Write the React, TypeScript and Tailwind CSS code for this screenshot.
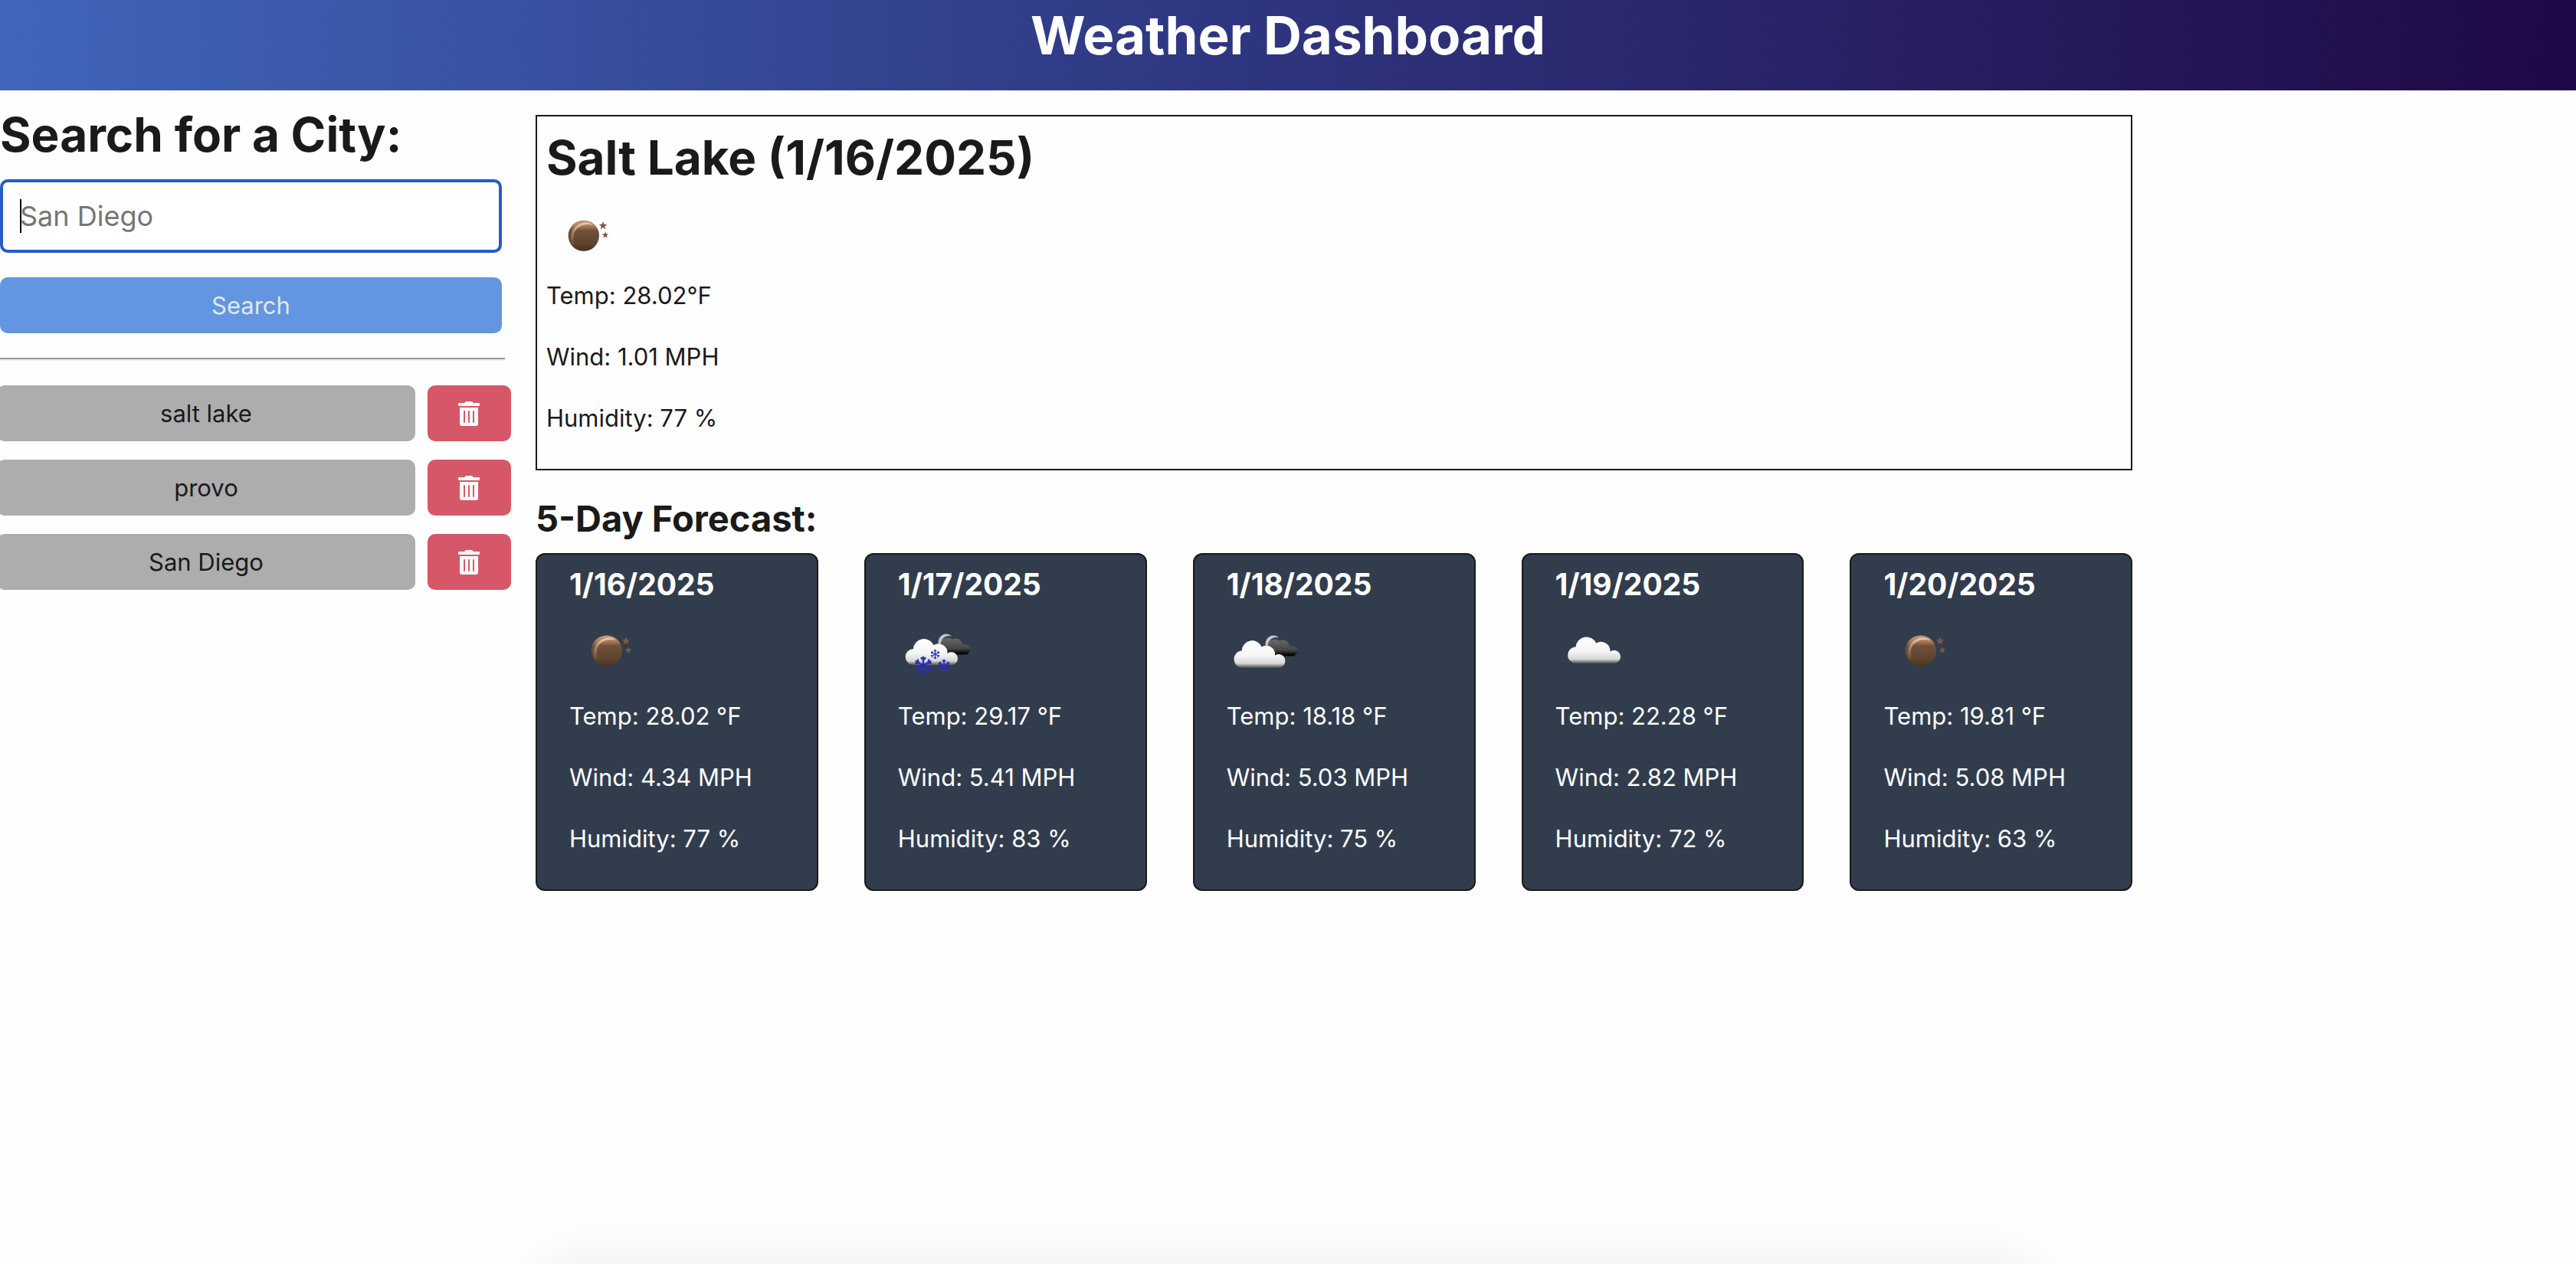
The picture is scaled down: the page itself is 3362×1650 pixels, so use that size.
import { FaTrashAlt } from "react-icons/fa";

type Sky = "clearNight" | "snow" | "brokenClouds" | "clouds";

const history = ["salt lake", "provo", "San Diego"];

const forecast: { date: string; sky: Sky; temp: string; wind: string; humidity: string }[] = [
  { date: "1/16/2025", sky: "clearNight", temp: "28.02", wind: "4.34", humidity: "77" },
  { date: "1/17/2025", sky: "snow", temp: "29.17", wind: "5.41", humidity: "83" },
  { date: "1/18/2025", sky: "brokenClouds", temp: "18.18", wind: "5.03", humidity: "75" },
  { date: "1/19/2025", sky: "clouds", temp: "22.28", wind: "2.82", humidity: "72" },
  { date: "1/20/2025", sky: "clearNight", temp: "19.81", wind: "5.08", humidity: "63" },
];

const starPath =
  "M0 -5.4 L1.5 -1.8 L5.2 -1.7 L2.3 0.8 L3.3 4.6 L0 2.5 L-3.3 4.6 L-2.3 0.8 L-5.2 -1.7 L-1.5 -1.8 Z";
const cloudPath =
  "M20.5 74 A10.5 10.5 0 0 1 19.9 53 A14 14 0 0 1 46.5 48 A12 12 0 0 1 64.6 58.8 A8.4 8.4 0 1 1 70 74 Z";
const darkCloudPath =
  "M58 60.5 A10.5 10.5 0 1 1 71.5 40.5 A8.5 8.5 0 0 1 84 47.8 A6.8 6.8 0 1 1 88 60.5 Z";

function Moon({ id }: { id: string }) {
  return (
    <>
      <defs>
        <linearGradient id={`${id}-moon`} x1="0" y1="0" x2="0" y2="1">
          <stop offset="0" stopColor="#cfa079" />
          <stop offset="0.2" stopColor="#a87a55" />
          <stop offset="0.34" stopColor="#70503a" />
          <stop offset="0.75" stopColor="#5f4430" />
          <stop offset="1" stopColor="#47321f" />
        </linearGradient>
        <linearGradient id={`${id}-rim`} x1="0" y1="0" x2="0" y2="1">
          <stop offset="0" stopColor="#f3e6dc" />
          <stop offset="1" stopColor="#b08c70" stopOpacity="0.2" />
        </linearGradient>
      </defs>
      <circle cx="48.8" cy="55.6" r="20.2" fill={`url(#${id}-moon)`} />
      <path
        d="M34 67 C28 54 36 39 52 38.5 C56 38.5 59 40 61 42 C50 39 38 43 36 55 C35.5 60 35.5 63 36.5 67 Z"
        fill={`url(#${id}-rim)`}
        opacity="0.75"
      />
      <path d={starPath} fill="#7a5a45" transform="translate(74 42.6)" />
      <path d={starPath} fill="#7a5a45" transform="translate(77 54.8) scale(.8)" />
    </>
  );
}

function Cloud({ id, transform }: { id: string; transform?: string }) {
  return (
    <g transform={transform}>
      <defs>
        <linearGradient id={`${id}-cloud`} x1="0" y1="0" x2="0" y2="1">
          <stop offset="0" stopColor="#ffffff" />
          <stop offset="0.55" stopColor="#f6f6f6" />
          <stop offset="0.85" stopColor="#d6d6d6" />
          <stop offset="0.93" stopColor="#8d8d8d" />
          <stop offset="1" stopColor="#5c5c5c" />
        </linearGradient>
      </defs>
      <path d={cloudPath} fill={`url(#${id}-cloud)`} />
    </g>
  );
}

function DarkCloud({ id, transform }: { id: string; transform?: string }) {
  return (
    <g transform={transform}>
      <defs>
        <linearGradient id={`${id}-dark`} x1="0" y1="0" x2="0" y2="1">
          <stop offset="0" stopColor="#6a6a6a" />
          <stop offset="0.65" stopColor="#454545" />
          <stop offset="0.9" stopColor="#0a0a0a" />
          <stop offset="1" stopColor="#000000" />
        </linearGradient>
      </defs>
      <path d={darkCloudPath} fill={`url(#${id}-dark)`} />
      <path
        d="M52.5 46 C52 38 58 33.5 63 33.5 C66 33.5 69 35 70 36.5 C64 34.5 56.5 38 55.5 47 Z"
        fill="#dcdcdc"
        opacity="0.85"
      />
    </g>
  );
}

function Flake({ x, y, scale }: { x: number; y: number; scale: number }) {
  return (
    <g transform={`translate(${x} ${y}) scale(${scale})`} stroke="#2a2ac0" strokeWidth="2.2">
      {[0, 60, 120, 180, 240, 300].map((angle) => (
        <path key={angle} d="M0 0 V-12 M-3.2 -10.5 L0 -7 L3.2 -10.5" fill="none" transform={`rotate(${angle})`} />
      ))}
    </g>
  );
}

function WeatherIcon({ sky, id }: { sky: Sky; id: string }) {
  return (
    <svg viewBox="0 0 100 100" className="block size-[100px]" role="img" aria-label={sky}>
      {sky === "clearNight" && <Moon id={id} />}
      {sky === "snow" && (
        <>
          <DarkCloud id={id} />
          <Cloud id={id} />
          <Flake x={33} y={74.7} scale={1} />
          <Flake x={48.5} y={60} scale={0.52} />
          <Flake x={60} y={75} scale={0.68} />
        </>
      )}
      {sky === "brokenClouds" && (
        <>
          <DarkCloud id={id} transform="translate(-2 2)" />
          <Cloud id={id} transform="translate(0 .5) scale(.98 1.04)" />
        </>
      )}
      {sky === "clouds" && <Cloud id={id} transform="translate(6.3 -3) scale(1.01 1.01)" />}
    </svg>
  );
}

export default function App() {
  return (
    <div className="flex min-h-screen flex-col overflow-hidden bg-[#fefefe] font-['Inter',sans-serif] text-[31px] leading-[48px] text-[#1a1a1a]">
      <header className="bg-linear-to-r from-[#4066ba] via-[#2e347e] to-[#1f0845] pb-[26px] text-center text-white">
        <h1 className="text-[69px] leading-[92px] font-bold">Weather Dashboard</h1>
      </header>

      <div className="flex gap-10">
        <aside className="w-[19.6%] shrink-0 pt-6">
          <form onSubmit={(event) => event.preventDefault()}>
            <h2 className="mb-6 text-[62px] leading-[68px] font-bold whitespace-nowrap">
              <label htmlFor="city">Search for a City:</label>
            </h2>
            <div className="relative mr-1">
              <input
                id="city"
                type="text"
                placeholder="San Diego"
                className="block h-24 w-full rounded-[10px] border-4 border-[#275bc5] bg-white px-[22px] text-[36px] outline-none placeholder:text-[#757575]"
              />
              <span className="absolute top-[26px] left-[26px] h-11 w-[2px] bg-black" />
            </div>
            <div className="mt-8 mr-1">
              <button type="submit" className="block h-[73px] w-full rounded-[10px] bg-[#6495e0] text-[#dfe9e7]">
                Search
              </button>
            </div>
          </form>
          <hr className="my-8 border-t-2 border-b-2 border-t-[#9a9a9a] border-b-[#eeeeee]" />
          <ul className="-mr-2 -ml-1 flex flex-col gap-6">
            {history.map((city) => (
              <li key={city} className="flex gap-4">
                <button type="button" className="h-[73px] flex-1 rounded-[10px] bg-[#adadad]">
                  {city}
                </button>
                <button
                  type="button"
                  aria-label={`Delete ${city}`}
                  className="flex h-[73px] w-[109px] items-center justify-center rounded-[10px] bg-[#d65767] text-[32px] text-white"
                >
                  <FaTrashAlt />
                </button>
              </li>
            ))}
          </ul>
        </aside>

        <main className="w-[62%] pt-8">
          <section className="border-2 border-[#1a1a1a] px-3 pt-2 pb-[10px]">
            <h2 className="text-[62px] leading-[92px] font-bold">Salt Lake (1/16/2025)</h2>
            <div className="mb-[10px]">
              <WeatherIcon sky="clearNight" id="today" />
            </div>
            <p className="mb-8">Temp: 28.02°F</p>
            <p className="mb-8">Wind: 1.01 MPH</p>
            <p className="mb-8">Humidity: 77 %</p>
          </section>

          <section className="mt-8">
            <h3 className="mb-[14px] text-[47px] leading-[62px] font-bold">5-Day Forecast:</h3>
            <div className="grid grid-cols-5 gap-[60px]">
              {forecast.map((day, index) => (
                <article
                  key={day.date}
                  className="rounded-xl border-2 border-[#1a1a1a] bg-[#313d4d] pt-2 pb-[10px] pl-[42px] text-white"
                >
                  <h4 className="text-[39px] leading-[62px] font-bold">{day.date}</h4>
                  <div className="mb-[17px]">
                    <WeatherIcon sky={day.sky} id={`day-${index}`} />
                  </div>
                  <p className="mb-8">Temp: {day.temp} °F</p>
                  <p className="mb-8">Wind: {day.wind} MPH</p>
                  <p className="mb-8">Humidity: {day.humidity} %</p>
                </article>
              ))}
            </div>
          </section>
        </main>
      </div>

      <div className="mx-auto mt-auto -mb-24 h-24 w-[58%] rounded-[40px] bg-[#f4f4f4] shadow-[0_0_80px_rgba(0,0,0,0.08)]" />
    </div>
  );
}
